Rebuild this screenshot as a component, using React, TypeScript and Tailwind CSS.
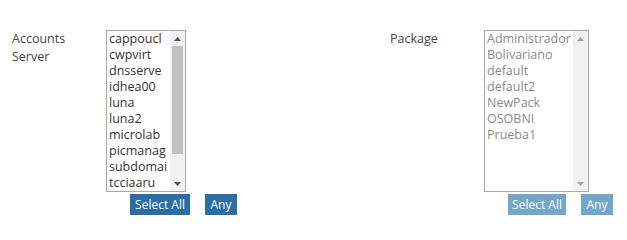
import React from "react";

const left = ["cappoucl", "cwpvirt", "dnsserve", "idhea00", "luna", "luna2", "microlab", "picmanag", "subdomai", "tcciaaru"];
const right = ["Administrador", "Bolivariano", "default", "default2", "NewPack", "OSOBNI", "Prueba1"];

function Scrollbar({ enabled }: { enabled: boolean }) {
  const arrow = enabled ? "#505050" : "#a3a3a3";
  return (
    <div className="flex w-[15px] flex-col bg-[#f1f1f1]">
      <div className="flex h-[15px] items-center justify-center">
        <svg width="7" height="4" viewBox="0 0 7 4"><path d="M0 4 L3.5 0 L7 4 Z" fill={arrow} /></svg>
      </div>
      <div className="flex-1 px-[2px]">
        {enabled && <div className="h-[108px] bg-[#c1c1c1]" />}
      </div>
      <div className="flex h-[15px] items-center justify-center">
        <svg width="7" height="4" viewBox="0 0 7 4"><path d="M0 0 L3.5 4 L7 0 Z" fill={arrow} /></svg>
      </div>
    </div>
  );
}

function Group({ label, items, width, disabled, btnW }: { label: React.ReactNode; items: string[]; width: string; disabled: boolean; btnW: string }) {
  return (
    <div className="flex">
      <div className="w-[94px] text-[12.5px] leading-[18px] text-[#444]">{label}</div>
      <div className="flex flex-col">
        <div className={`flex h-[162px] border border-[#a9a9a9] bg-white ${width}`}>
          <div className={`flex-1 overflow-hidden pl-[2px] text-[12.5px] leading-[16px] whitespace-nowrap ${disabled ? "text-[#8a8a8a]" : "text-[#333]"}`}>
            {items.map((i) => (
              <div key={i} className="h-[16px]">{i}</div>
            ))}
          </div>
          <Scrollbar enabled={!disabled} />
        </div>
        <div className="mt-[2px] flex gap-[15px] pl-[24px]">
          <div className={`flex h-[21px] ${btnW} items-center justify-center text-[12px] text-white ${disabled ? "bg-[#74a6cc]" : "bg-[#2a6ea6]"}`}>Select All</div>
          <div className={`flex h-[21px] w-[32px] items-center justify-center text-[12px] text-white ${disabled ? "bg-[#74a6cc]" : "bg-[#2a6ea6]"}`}>Any</div>
        </div>
      </div>
    </div>
  );
}

export default function App() {
  return (
    <div className="h-[234px] w-[627px] bg-white pl-[12px] pt-[30px]" style={{ fontFamily: '"Open Sans", "Noto Sans", sans-serif' }}>
      <div className="flex">
        <div className="w-[378px]">
          <Group label={<>Accounts<br />Server</>} items={left} width="w-[80px]" disabled={false} btnW="w-[60px]" />
        </div>
        <Group label="Package" items={right} width="w-[105px]" disabled={true} btnW="w-[58px]" />
      </div>
    </div>
  );
}
